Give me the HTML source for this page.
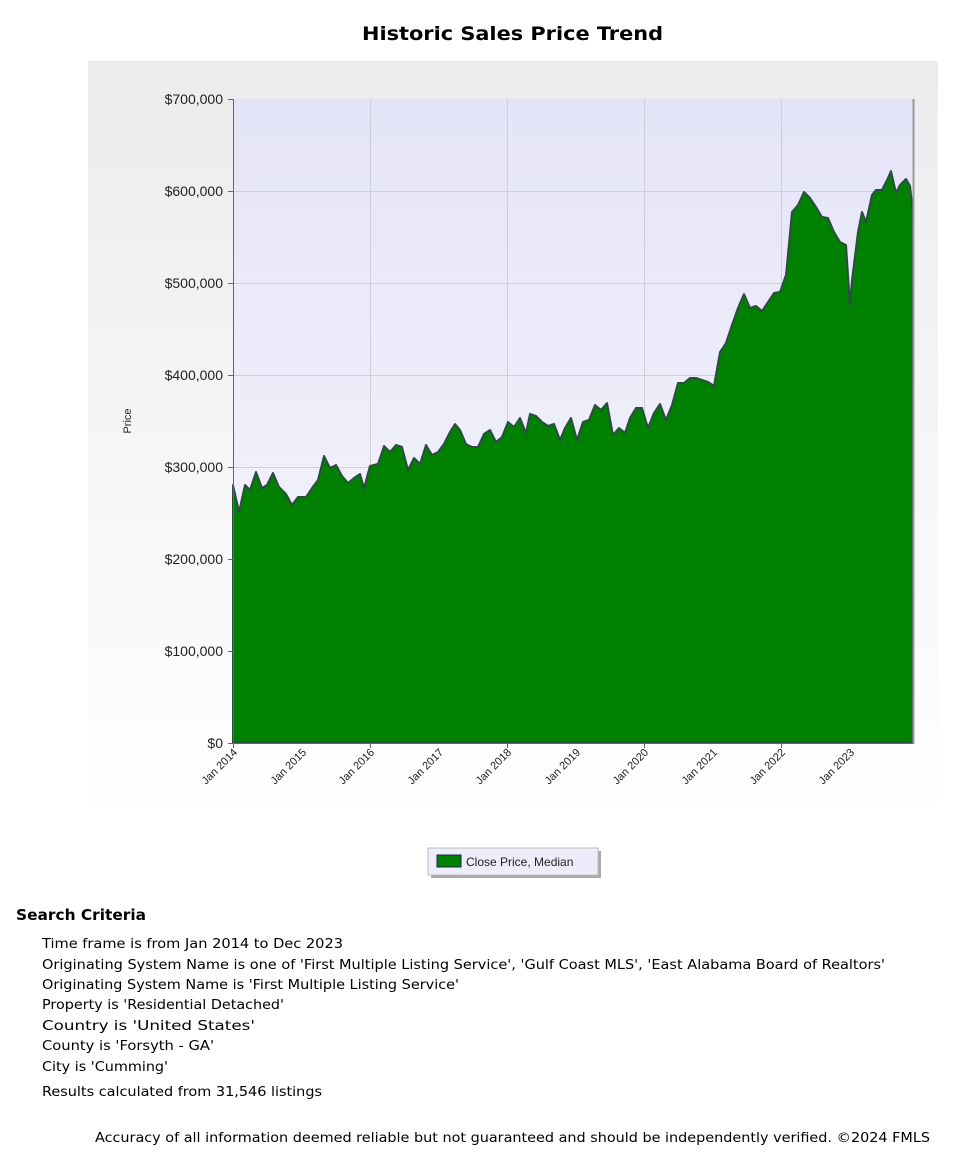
<!DOCTYPE html>
<html><head><meta charset="utf-8"><style>html,body{margin:0;padding:0;background:#fff;width:975px;height:1170px;overflow:hidden}</style></head>
<body>
<svg width="975" height="1170" viewBox="0 0 975 1170" xmlns="http://www.w3.org/2000/svg" font-family="Liberation Sans, Arial, sans-serif">
<defs>
<linearGradient id="pbg" x1="0" y1="0" x2="0" y2="1"><stop offset="0" stop-color="#ececec"/><stop offset="1" stop-color="#ffffff"/></linearGradient>
<linearGradient id="plot" x1="0" y1="0" x2="0" y2="1"><stop offset="0" stop-color="#e4e4f8"/><stop offset="1" stop-color="#f8f8fd"/></linearGradient>
</defs>
<text x="362" y="40" font-family="DejaVu Sans, sans-serif" font-weight="bold" font-size="19" textLength="301" lengthAdjust="spacingAndGlyphs">Historic Sales Price Trend</text>
<rect x="88" y="61" width="850" height="760" fill="url(#pbg)"/>
<rect x="233" y="99" width="680" height="644" fill="url(#plot)"/>
<g stroke="#cfcfd8" stroke-width="1">
<line x1="370.5" y1="99" x2="370.5" y2="743"/><line x1="507.5" y1="99" x2="507.5" y2="743"/><line x1="644.5" y1="99" x2="644.5" y2="743"/><line x1="781.5" y1="99" x2="781.5" y2="743"/>
<line x1="233" y1="191.5" x2="913" y2="191.5"/><line x1="233" y1="283.5" x2="913" y2="283.5"/><line x1="233" y1="375.5" x2="913" y2="375.5"/><line x1="233" y1="467.5" x2="913" y2="467.5"/><line x1="233" y1="559.5" x2="913" y2="559.5"/><line x1="233" y1="651.5" x2="913" y2="651.5"/>
</g>
<polygon fill="#008000" stroke="#2f4a45" stroke-width="2" stroke-linejoin="round" points="233,743 233,485 239,512 245,485 250,490 256,472 262,488 267,485 273,473 279,487 286,494 292,505 298,497 306,497 312,488 318,480 324,456 330,468 336,465 342,476 348,483 354,478 360,474 364,488 370,466 378,464 384,446 390,452 396,445 402,447 408,470 414,458 420,464 426,445 432,455 438,452 444,444 450,432 455,424 460,430 466,444 472,447 478,447 484,434 490,430 496,442 502,437 508,422 514,427 520,418 526,433 530,414 536,416 542,422 548,426 554,424 560,440 565,428 571,418 577,440 583,422 589,420 595,405 601,410 607,403 613,435 619,428 625,433 630,418 636,408 642,408 648,428 654,413 660,404 666,420 672,405 678,383 684,383 690,378 696,378 702,380 708,382 714,386 720,352 726,343 732,325 738,308 744,294 750,308 756,306 762,311 768,302 774,293 780,292 786,275 792,212 798,205 804,192 810,198 816,207 822,217 828,218 834,232 840,242 846,245 850,305 852,280 858,232 862,212 866,222 872,195 876,190 882,190 888,178 891,171 896,193 900,185 906,179 910,186 913,212 913,743"/>
<line x1="233.5" y1="99" x2="233.5" y2="748" stroke="#666"/>
<line x1="228" y1="743.5" x2="913" y2="743.5" stroke="#666"/>
<line x1="913.5" y1="99" x2="913.5" y2="743" stroke="#999" stroke-width="2"/>
<g stroke="#666"><line x1="228" y1="99.5" x2="233" y2="99.5"/><line x1="228" y1="191.5" x2="233" y2="191.5"/><line x1="228" y1="283.5" x2="233" y2="283.5"/><line x1="228" y1="375.5" x2="233" y2="375.5"/><line x1="228" y1="467.5" x2="233" y2="467.5"/><line x1="228" y1="559.5" x2="233" y2="559.5"/><line x1="228" y1="651.5" x2="233" y2="651.5"/>
<line x1="370.5" y1="743" x2="370.5" y2="748"/><line x1="507.5" y1="743" x2="507.5" y2="748"/><line x1="644.5" y1="743" x2="644.5" y2="748"/><line x1="781.5" y1="743" x2="781.5" y2="748"/></g>
<g font-size="14" fill="#222" text-anchor="end">
<text x="223" y="104">$700,000</text><text x="223" y="196">$600,000</text><text x="223" y="288">$500,000</text><text x="223" y="380">$400,000</text><text x="223" y="472">$300,000</text><text x="223" y="564">$200,000</text><text x="223" y="656">$100,000</text><text x="223" y="748">$0</text>
</g>
<text transform="translate(131,421) rotate(-90)" font-size="11" text-anchor="middle" fill="#222">Price</text>
<g font-size="11" fill="#222" text-anchor="end">
<text transform="translate(238,753) rotate(-45)">Jan 2014</text>
<text transform="translate(307,753) rotate(-45)">Jan 2015</text>
<text transform="translate(375,753) rotate(-45)">Jan 2016</text>
<text transform="translate(444,753) rotate(-45)">Jan 2017</text>
<text transform="translate(512,753) rotate(-45)">Jan 2018</text>
<text transform="translate(581,753) rotate(-45)">Jan 2019</text>
<text transform="translate(649,753) rotate(-45)">Jan 2020</text>
<text transform="translate(718,753) rotate(-45)">Jan 2021</text>
<text transform="translate(786,753) rotate(-45)">Jan 2022</text>
<text transform="translate(855,753) rotate(-45)">Jan 2023</text>
</g>
<rect x="431" y="851" width="170" height="27" fill="#aaa"/>
<rect x="428" y="848" width="170" height="27" fill="#ececfa" stroke="#bbb"/>
<rect x="437" y="855" width="24" height="12" fill="#008000" stroke="#225"/>
<text x="466" y="866" font-size="12" fill="#222">Close Price, Median</text>
<g font-family="DejaVu Sans, sans-serif" fill="#000">
<text x="16" y="920" font-weight="bold" font-size="15" textLength="130" lengthAdjust="spacingAndGlyphs">Search Criteria</text>
<g font-size="13">
<text x="42" y="948" textLength="301" lengthAdjust="spacingAndGlyphs">Time frame is from Jan 2014 to Dec 2023</text>
<text x="42" y="969" textLength="843" lengthAdjust="spacingAndGlyphs">Originating System Name is one of 'First Multiple Listing Service', 'Gulf Coast MLS', 'East Alabama Board of Realtors'</text>
<text x="42" y="989" textLength="417" lengthAdjust="spacingAndGlyphs">Originating System Name is 'First Multiple Listing Service'</text>
<text x="42" y="1009" textLength="242" lengthAdjust="spacingAndGlyphs">Property is 'Residential Detached'</text>
<text x="42" y="1030" textLength="213" lengthAdjust="spacingAndGlyphs">Country is 'United States'</text>
<text x="42" y="1050" textLength="172" lengthAdjust="spacingAndGlyphs">County is 'Forsyth - GA'</text>
<text x="42" y="1071" textLength="126" lengthAdjust="spacingAndGlyphs">City is 'Cumming'</text>
<text x="42" y="1096" textLength="280" lengthAdjust="spacingAndGlyphs">Results calculated from 31,546 listings</text>
<text x="95" y="1142" textLength="835" lengthAdjust="spacingAndGlyphs">Accuracy of all information deemed reliable but not guaranteed and should be independently verified. ©2024 FMLS</text>
</g></g>
</svg>
</body></html>
